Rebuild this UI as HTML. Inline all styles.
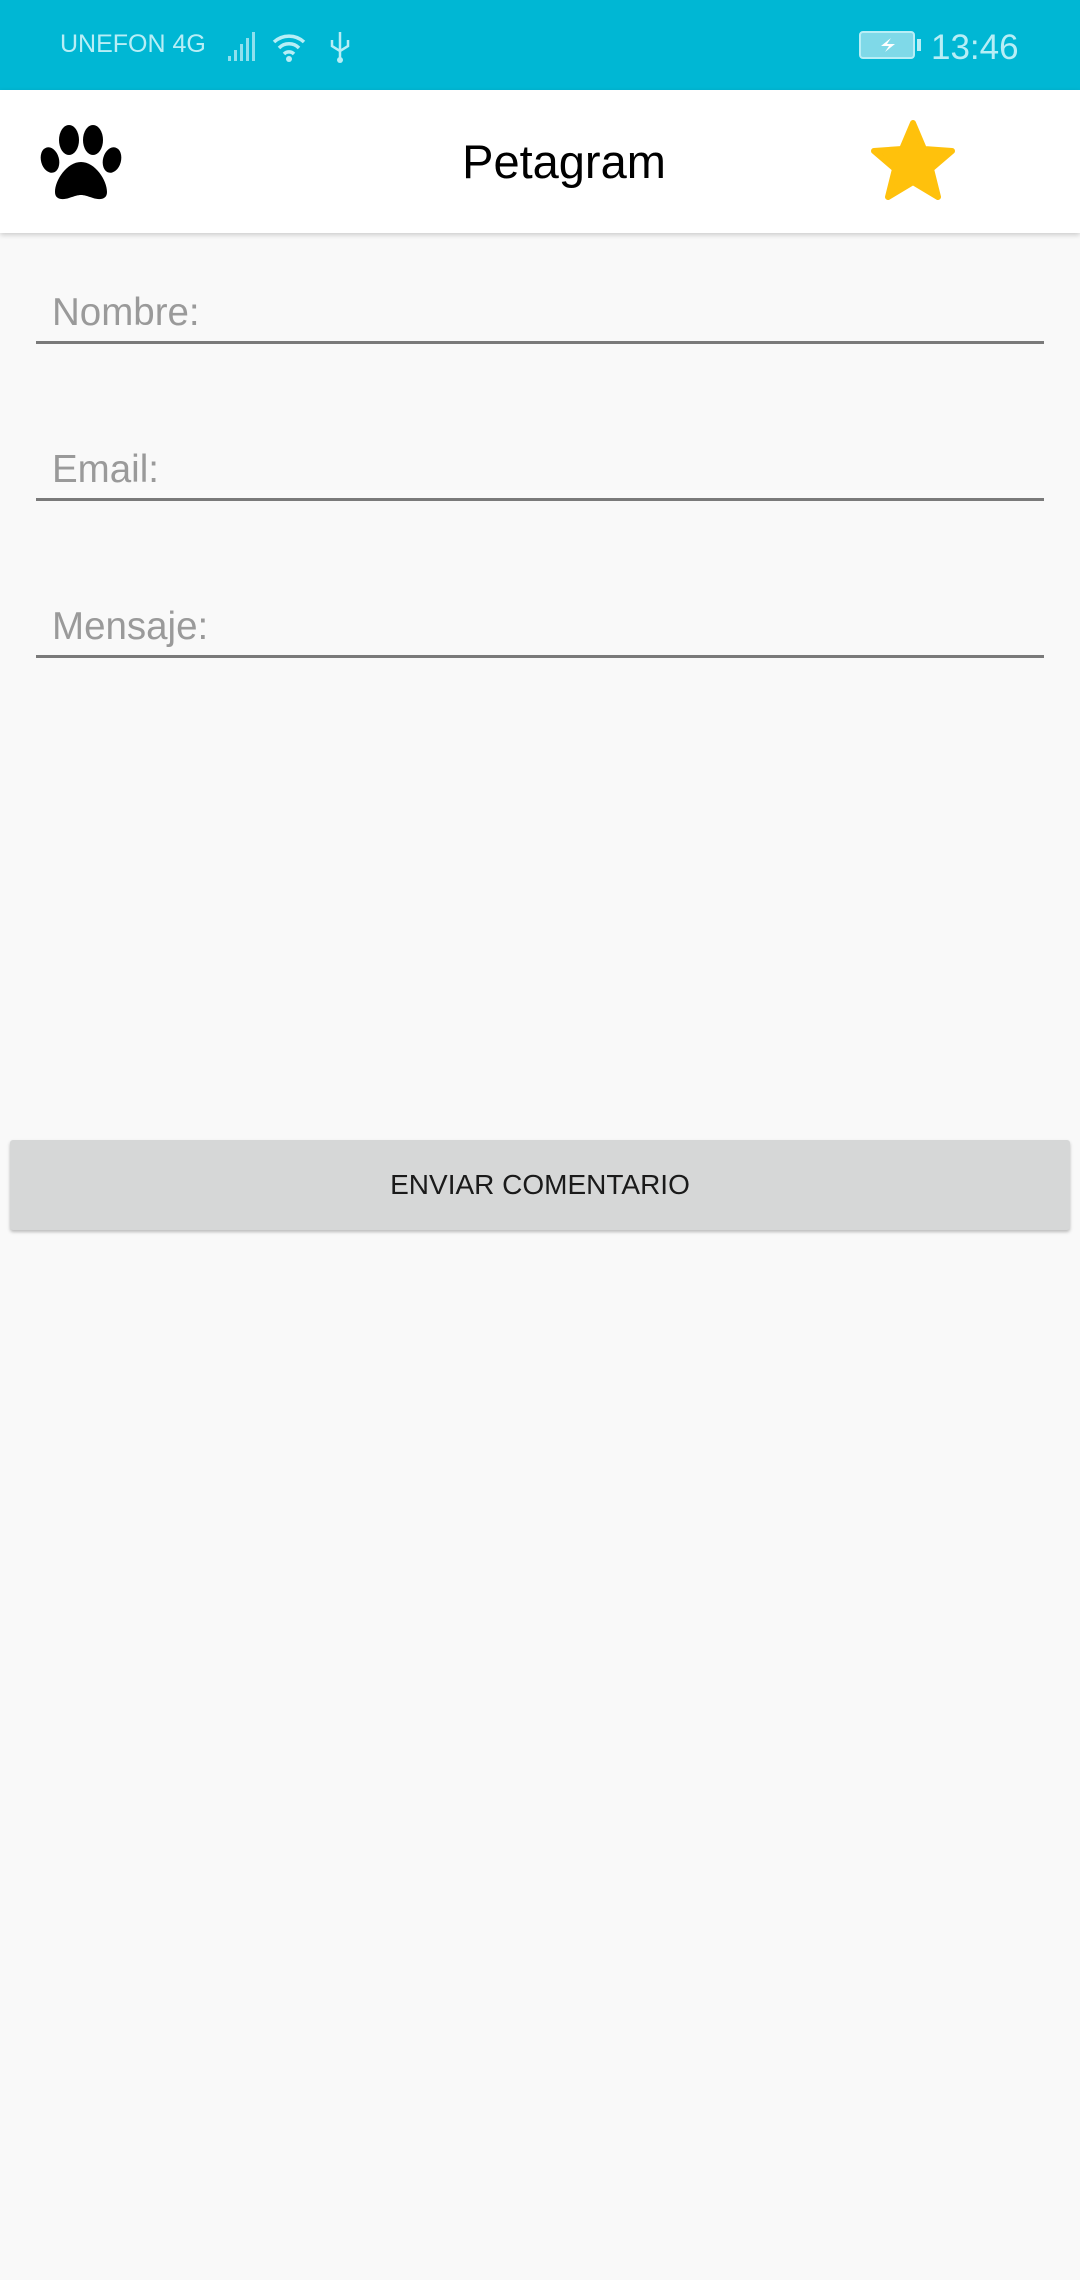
<!DOCTYPE html>
<html><head><meta charset="utf-8"><style>
*{margin:0;padding:0;box-sizing:border-box}
body{width:1080px;height:2280px;background:#f9f9f9;font-family:"Liberation Sans",sans-serif;position:relative;overflow:hidden}
.sb{position:absolute;left:0;top:0;width:1080px;height:90px;background:#00b7d4}
.tb{position:absolute;left:0;top:90px;width:1080px;height:143px;background:#fff;box-shadow:0 2px 5px rgba(0,0,0,.18)}
.lbl{position:absolute;left:52px;font-size:38.5px;color:#9a9a9a}
.ln{position:absolute;left:36px;width:1008px;height:3px;background:#7a7a7a}
</style></head><body>
<div class="sb">
<div style="position:absolute;left:60px;top:30px;font-size:25px;color:#b8eef6">UNEFON 4G</div>
<svg style="position:absolute;left:228px;top:28px" width="130" height="36" viewBox="0 0 130 36">
<g fill="#8fe0ee"><rect x="0" y="28" width="3" height="5"/><rect x="6" y="22" width="3" height="11"/><rect x="12" y="16" width="3" height="17"/><rect x="18" y="10" width="3" height="23"/><rect x="24" y="4" width="3" height="29"/></g>
<g fill="none" stroke="#b8eef6" stroke-width="3.5"><path d="M46 14a22 22 0 0 1 30 0"/><path d="M51 20a14 14 0 0 1 20 0"/><path d="M56 26a7 7 0 0 1 10 0"/></g>
<circle cx="61" cy="31" r="3" fill="#b8eef6"/>
<g stroke="#b8eef6" stroke-width="2.5" fill="none"><path d="M112 4v28M104 12v6l8 5 8-5v-6"/></g>
<circle cx="112" cy="32" r="3" fill="#b8eef6"/>
</svg>
<svg style="position:absolute;left:859px;top:31px" width="64" height="28" viewBox="0 0 64 28"><rect x="1" y="1" width="54" height="26" rx="3" fill="#7fd9e8" stroke="#b8eef6" stroke-width="2"/><rect x="58" y="8" width="4" height="12" fill="#b8eef6"/><path d="M32 7l-10 8h8l-4 6 10-8h-8z" fill="#fff"/></svg>
<div style="position:absolute;left:931px;top:28px;font-size:35px;color:#b8eef6">13:46</div>
</div>
<div class="tb">
<svg style="position:absolute;left:38px;top:34px" width="86" height="76" viewBox="0 0 86 76">
<g fill="#000"><ellipse cx="12" cy="36" rx="9" ry="13" transform="rotate(-15 12 36)"/><ellipse cx="31" cy="16" rx="10" ry="15"/><ellipse cx="55" cy="16" rx="10" ry="15"/><ellipse cx="74" cy="36" rx="9" ry="13" transform="rotate(15 74 36)"/><path d="M43 38c-14 0-26 18-26 30 0 8 8 8 14 6 6-2 9-3 12-3s6 1 12 3c6 2 14 2 14-6 0-12-12-30-26-30z"/></g></svg>
<div style="position:absolute;left:0;width:1128px;text-align:center;top:44px;font-size:47px;color:#000">Petagram</div>
<svg style="position:absolute;left:870px;top:30px" width="86" height="84" viewBox="0 0 86 84"><path d="M43 3l11 26 28 2-21 18 7 28-25-15-25 15 7-28-21-18 28-2z" fill="#ffc10c" stroke="#ffc10c" stroke-width="6" stroke-linejoin="round"/></svg>
</div>
<div class="lbl" style="top:291px">Nombre:</div><div class="ln" style="top:341px"></div>
<div class="lbl" style="top:448px">Email:</div><div class="ln" style="top:498px"></div>
<div class="lbl" style="top:605px">Mensaje:</div><div class="ln" style="top:655px"></div>
<div style="position:absolute;left:10px;top:1140px;width:1060px;height:90px;background:#d6d7d7;border-radius:3px;box-shadow:0 2px 3px rgba(0,0,0,.25);text-align:center;line-height:90px;font-size:28px;color:#1a1a1a">ENVIAR COMENTARIO</div>
</body></html>
